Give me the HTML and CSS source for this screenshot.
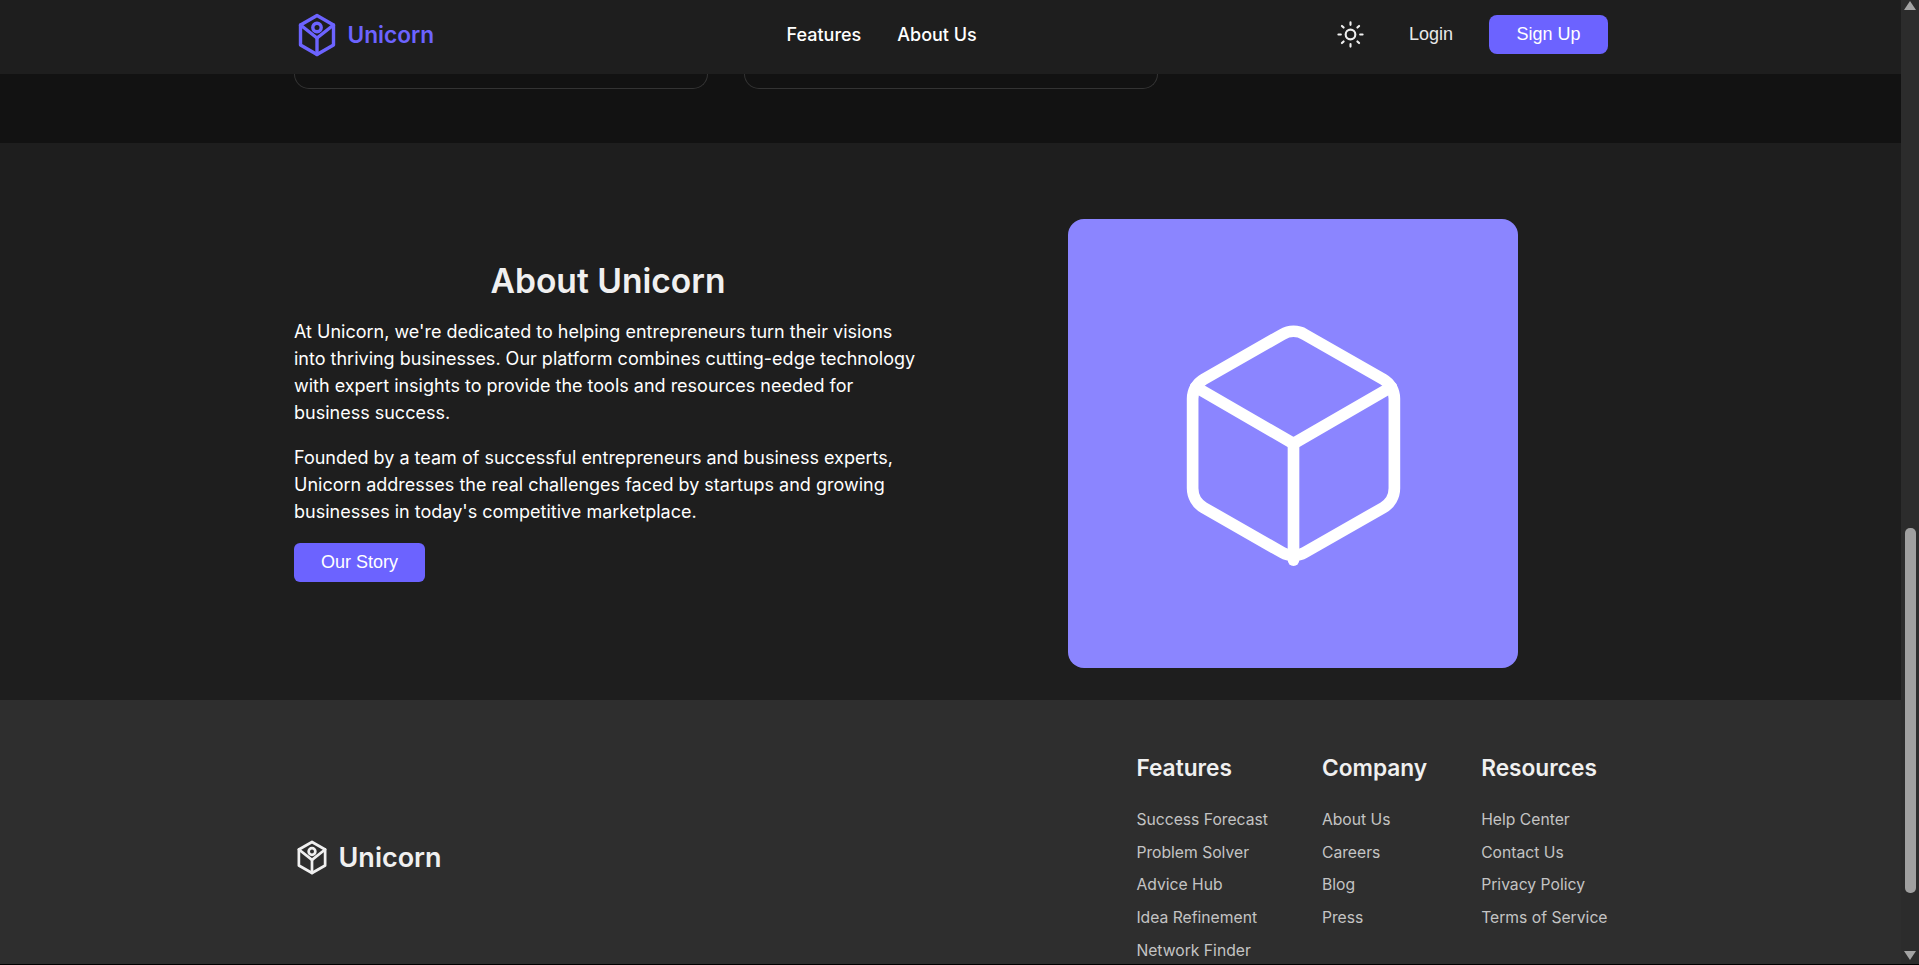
FILE: index.html
```html
<!DOCTYPE html>
<html lang="en">
<head>
    <meta charset="UTF-8">
    <title>Unicorn</title>
    <link rel="stylesheet" href="styles.css">
</head>
<body>
    <div class="page">
        <div class="main">
            <header class="navbar">
                <a class="logo" href="#">
                    <svg class="logo_icon" viewBox="0 0 40 44" fill="none" stroke="#6c63ff" stroke-width="3.4" stroke-linecap="round" stroke-linejoin="round"><path d="M20 2.5 36.5 12v20L20 41.5 3.5 32V12z"/><circle cx="20" cy="14.5" r="4.2"/><path d="M3.5 12 20 25l16.5-13"/><path d="M20 25v16.5"/></svg>
                    <span>Unicorn</span>
                </a>
                <nav class="nav_links">
                    <a href="#">Features</a>
                    <a href="#">About Us</a>
                </nav>
                <div class="nav_actions">
                    <svg class="sun_icon" viewBox="0 0 24 24" fill="none" stroke="#f0f0f0" stroke-width="1.75" stroke-linecap="round"><circle cx="12" cy="12" r="4"/><path d="M12 2v2M12 20v2M4.9 4.9l1.4 1.4M17.7 17.7l1.4 1.4M2 12h2M20 12h2M6.3 17.7l-1.4 1.4M19.1 4.9l-1.4 1.4"/></svg>
                    <a class="login_link" href="#">Login</a>
                    <a class="signup_button" href="#">Sign Up</a>
                </div>
            </header>
            <div class="features_end">
                <div class="feature_card"></div>
                <div class="feature_card"></div>
            </div>
            <section class="about">
                <div class="about_text">
                    <h2 class="about_head">About Unicorn</h2>
                    <p>At Unicorn, we're dedicated to helping entrepreneurs turn their visions into thriving businesses. Our platform combines cutting-edge technology with expert insights to provide the tools and resources needed for business success.</p>
                    <p>Founded by a team of successful entrepreneurs and business experts, Unicorn addresses the real challenges faced by startups and growing businesses in today's competitive marketplace.</p>
                    <a class="story_button" href="#">Our Story</a>
                </div>
                <div class="about_picture">
                    <svg viewBox="0 0 24 24" fill="none" stroke="#fff" stroke-width="1.04" stroke-linecap="round" stroke-linejoin="round"><path d="M21 16V8a2 2 0 0 0-1-1.73l-7-4a2 2 0 0 0-2 0l-7 4A2 2 0 0 0 3 8v8a2 2 0 0 0 1 1.73l7 4a2 2 0 0 0 2 0l7-4A2 2 0 0 0 21 16z"/><path d="M3.27 6.96 12 12.01l8.73-5.05"/><path d="M12 22.4V12"/></svg>
                </div>
            </section>
            <footer class="footer">
                <div class="footer_logo">
                    <svg viewBox="0 0 40 44" fill="none" stroke="#f0f0f0" stroke-width="3.4" stroke-linecap="round" stroke-linejoin="round"><path d="M20 2.5 36.5 12v20L20 41.5 3.5 32V12z"/><circle cx="20" cy="14.5" r="4.2"/><path d="M3.5 12 20 25l16.5-13"/><path d="M20 25v16.5"/></svg>
                    <span>Unicorn</span>
                </div>
                <div class="footer_columns">
                    <div class="footer_col">
                        <h3>Features</h3>
                        <a href="#">Success Forecast</a>
                        <a href="#">Problem Solver</a>
                        <a href="#">Advice Hub</a>
                        <a href="#">Idea Refinement</a>
                        <a href="#">Network Finder</a>
                    </div>
                    <div class="footer_col">
                        <h3>Company</h3>
                        <a href="#">About Us</a>
                        <a href="#">Careers</a>
                        <a href="#">Blog</a>
                        <a href="#">Press</a>
                    </div>
                    <div class="footer_col">
                        <h3>Resources</h3>
                        <a href="#">Help Center</a>
                        <a href="#">Contact Us</a>
                        <a href="#">Privacy Policy</a>
                        <a href="#">Terms of Service</a>
                    </div>
                </div>
            </footer>
        </div>
        <div class="scrollbar">
            <div class="scroll_arrow_up"></div>
            <div class="scroll_track"><div class="scroll_thumb"></div></div>
            <div class="scroll_arrow_down"></div>
        </div>
    </div>
</body>
</html>
```

FILE: styles.css
```css
html, body {
    margin: 0;
    padding: 0;
    height: 965px;
    overflow: hidden;
}
body {
    font-family: Inter, "Liberation Sans", sans-serif;
    background-color: #1e1e1e;
    color: #fff;
}
a {
    text-decoration: none;
    color: inherit;
}
.page {
    display: flex;
    height: 964px;
    overflow: hidden;
    border-bottom: 1px solid #000;
}
.main {
    flex: 1;
    min-width: 0;
}

/* top bar */
.navbar {
    display: flex;
    align-items: center;
    height: 69px;
    padding: 0 293px 5px 296.5px;
    background-color: #1e1e1e;
}
.logo {
    display: flex;
    align-items: center;
    gap: 11px;
    width: 490px;
    color: #6c63ff;
    font-size: 22.7px;
    font-weight: 600;
}
.logo_icon {
    width: 40px;
    height: 44px;
}
.nav_links {
    display: flex;
    gap: 36px;
    font-size: 18px;
    font-weight: 500;
}
.nav_actions {
    display: flex;
    align-items: center;
    margin-left: auto;
    font-family: "Liberation Sans", sans-serif;
    font-size: 18px;
}
.sun_icon {
    width: 29px;
    height: 29px;
    margin-right: 44px;
}
.login_link {
    margin-right: 36px;
    color: #e8e8e8;
}
.signup_button {
    display: block;
    width: 119px;
    height: 39px;
    line-height: 38px;
    text-align: center;
    background-color: #6c63ff;
    border-radius: 8px;
}

/* tail of the features section */
.features_end {
    display: flex;
    gap: 36px;
    height: 69px;
    padding-left: 294px;
    background-color: #121212;
}
.feature_card {
    width: 412px;
    height: 14px;
    border: 1px solid #333;
    border-top: none;
    border-radius: 0 0 16px 16px;
}

/* about */
.about {
    display: flex;
    height: 557px;
    background-color: #1e1e1e;
}
.about_text {
    width: 622px;
    margin: 76px 0 0 294px;
    font-size: 18px;
    line-height: 27px;
}
.about_head {
    margin: 42px 0 17px;
    padding-left: 6px;
    font-size: 33.6px;
    font-weight: 600;
    line-height: 40px;
    text-align: center;
    color: #f0f0f0;
}
.about_text p {
    margin: 0 0 18px;
}
.story_button {
    display: block;
    width: 131px;
    height: 39px;
    line-height: 38px;
    text-align: center;
    font-family: "Liberation Sans", sans-serif;
    background-color: #6c63ff;
    border-radius: 6px;
}
.about_picture {
    display: flex;
    align-items: center;
    justify-content: center;
    width: 450px;
    height: 449px;
    margin: 76px 0 0 152px;
    background-color: #8b85ff;
    border-radius: 16px;
}
.about_picture svg {
    width: 269px;
    height: 269px;
}

/* footer */
.footer {
    display: flex;
    justify-content: space-between;
    align-items: center;
    height: 314px;
    padding: 0 293.5px 0 295.5px;
    background-color: #2e2e2e;
}
.footer_logo {
    display: flex;
    align-items: center;
    gap: 11px;
    color: #f0f0f0;
    font-size: 27px;
    font-weight: 600;
}
.footer_logo svg {
    width: 32px;
    height: 35px;
}
.footer_columns {
    display: flex;
    gap: 54px;
    align-self: flex-start;
    padding-top: 53px;
}
.footer_col {
    display: flex;
    flex-direction: column;
    gap: 12px;
    font-size: 15.7px;
    line-height: 20.7px;
    color: #c4c4c4;
}
.footer_col h3 {
    margin: 0 0 15px;
    font-size: 22.7px;
    font-weight: 600;
    line-height: 30px;
    color: #f0f0f0;
}

/* scrollbar */
.scrollbar {
    display: flex;
    flex-direction: column;
    align-items: center;
    width: 18px;
    background-color: #2c2c2c;
}
.scroll_track {
    flex: 1;
    padding-top: 518px;
}
.scroll_thumb {
    width: 11px;
    height: 365px;
    background-color: #a0a0a0;
    border-radius: 5px;
}
.scroll_arrow_up, .scroll_arrow_down {
    width: 0;
    height: 0;
    border-left: 6.5px solid transparent;
    border-right: 6.5px solid transparent;
}
.scroll_arrow_up {
    margin-top: 1px;
    border-bottom: 9px solid #a3a3a3;
}
.scroll_arrow_down {
    margin-bottom: 4px;
    border-top: 9px solid #a3a3a3;
}
```
